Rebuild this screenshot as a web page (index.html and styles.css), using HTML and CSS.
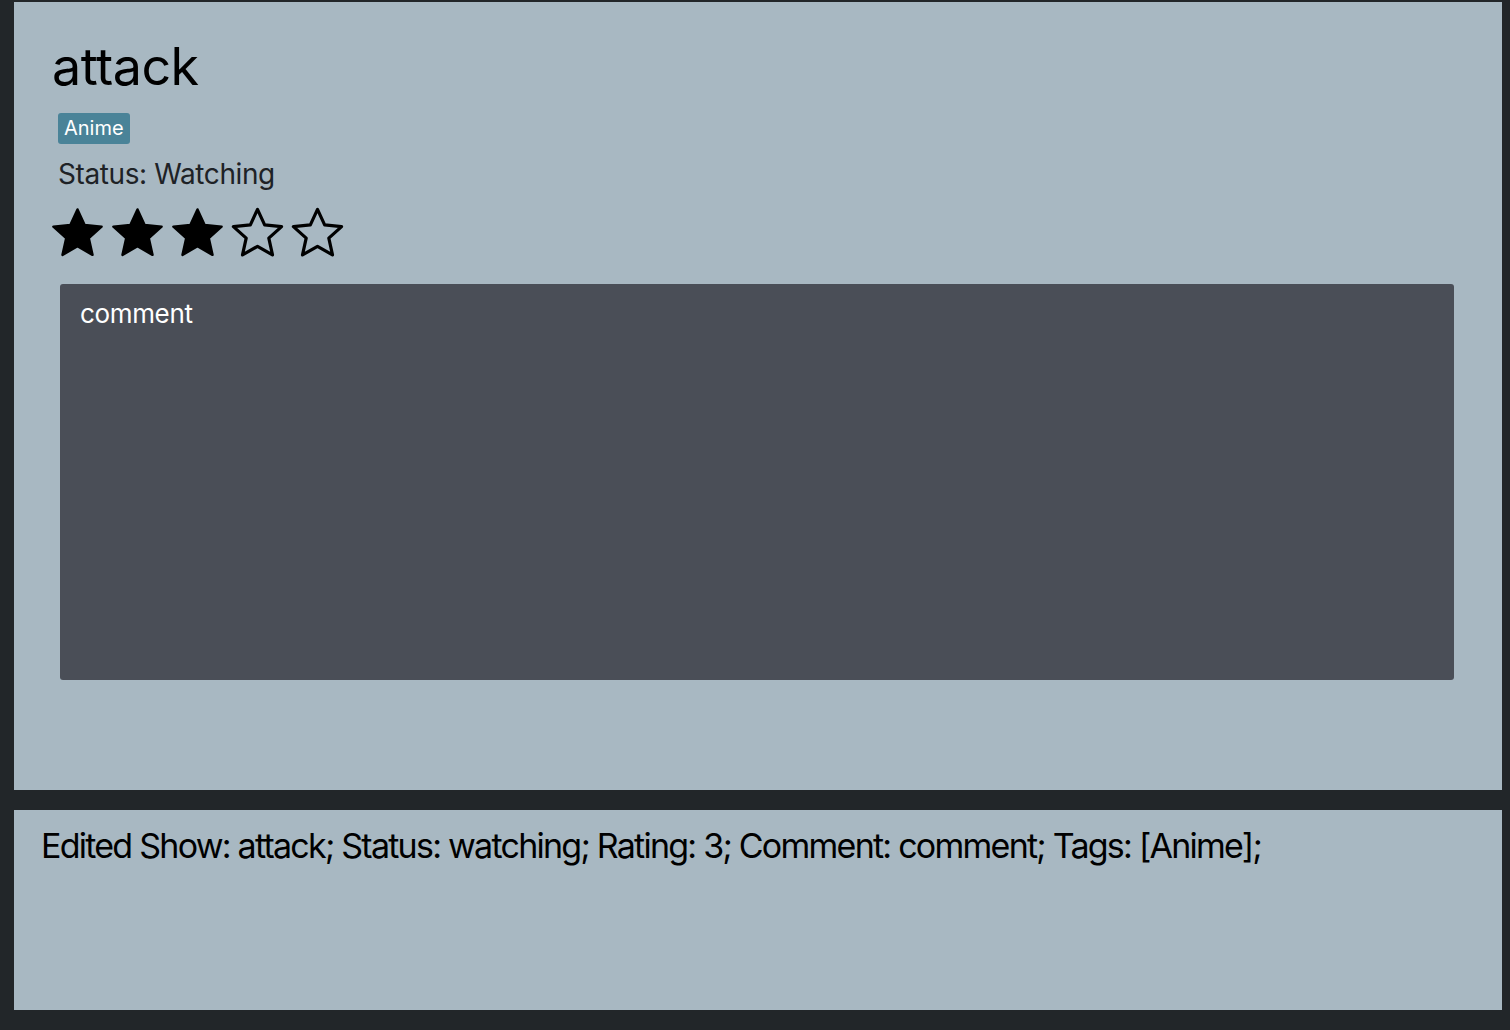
FILE: index.html
```html
<!DOCTYPE html>
<html>
<head>
<meta charset="utf-8">
<link rel="stylesheet" href="styles.css">
</head>
<body>
<div class="page">
  <section class="card">
    <h1 class="title">attack</h1>
    <div class="tags"><span class="tag">Anime</span></div>
    <div class="status">Status: Watching</div>
    <div class="stars">
      <svg class="star" viewBox="0 0 24 24"><path class="full" d="M12 2.2l2.9 6.3 6.9.7-5.2 4.7 1.5 6.8L12 17.2l-6.1 3.5 1.5-6.8-5.2-4.7 6.9-.7z"/></svg>
      <svg class="star" viewBox="0 0 24 24"><path class="full" d="M12 2.2l2.9 6.3 6.9.7-5.2 4.7 1.5 6.8L12 17.2l-6.1 3.5 1.5-6.8-5.2-4.7 6.9-.7z"/></svg>
      <svg class="star" viewBox="0 0 24 24"><path class="full" d="M12 2.2l2.9 6.3 6.9.7-5.2 4.7 1.5 6.8L12 17.2l-6.1 3.5 1.5-6.8-5.2-4.7 6.9-.7z"/></svg>
      <svg class="star" viewBox="0 0 24 24"><path class="empty" d="M12 2.2l2.9 6.3 6.9.7-5.2 4.7 1.5 6.8L12 17.2l-6.1 3.5 1.5-6.8-5.2-4.7 6.9-.7z"/></svg>
      <svg class="star" viewBox="0 0 24 24"><path class="empty" d="M12 2.2l2.9 6.3 6.9.7-5.2 4.7 1.5 6.8L12 17.2l-6.1 3.5 1.5-6.8-5.2-4.7 6.9-.7z"/></svg>
    </div>
    <div class="comment">comment</div>
  </section>
  <section class="log">
    <p class="log-text">Edited Show: attack; Status: watching; Rating: 3; Comment: comment; Tags: [Anime];</p>
  </section>
</div>
</body>
</html>
```

FILE: styles.css
```css
html, body {
  margin: 0;
  padding: 0;
  background: #222629;
}
body {
  font-family: Inter, "Noto Sans", sans-serif;
}
.page {
  display: flex;
  flex-direction: column;
  gap: 20px;
  padding: 2px 8px 20px 14px;
}
.card {
  background: #a8b8c2;
  height: 788px;
  box-sizing: border-box;
  padding: 30px 48px 0 38px;
  display: flex;
  flex-direction: column;
}
.title {
  margin: 0;
  font-size: 52px;
  font-weight: 400;
  line-height: 70px;
  color: #000;
  letter-spacing: -0.5px;
}
.tags {
  display: flex;
  margin: 11px 0 0 6px;
}
.tag {
  background: #4a8398;
  color: #fff;
  font-size: 20px;
  line-height: 31px;
  padding: 0 6px;
  border-radius: 3px;
}
.status {
  margin: 12px 0 0 6px;
  font-size: 28px;
  line-height: 36px;
  color: #1e2226;
  letter-spacing: -0.4px;
}
.stars {
  display: flex;
  gap: 1px;
  margin: 12px 0 0 -4px;
}
.star {
  width: 59px;
  height: 59px;
}
.full {
  fill: #000;
  stroke: #000;
  stroke-width: 1;
  stroke-linejoin: round;
}
.empty {
  fill: none;
  stroke: #000;
  stroke-width: 1.3;
  stroke-linejoin: round;
}
.comment {
  margin: 21px 0 0 8px;
  height: 396px;
  background: #4a4e57;
  border-radius: 3px;
  color: #fff;
  font-size: 26px;
  padding: 14px 20px;
  box-sizing: border-box;
  letter-spacing: -0.35px;
}
.log {
  background: #a8b8c2;
  height: 200px;
  box-sizing: border-box;
  padding: 16px 27px;
}
.log-text {
  margin: 0;
  font-size: 34px;
  line-height: 40px;
  color: #000;
  letter-spacing: -1.75px;
  word-spacing: 0;
}
```
